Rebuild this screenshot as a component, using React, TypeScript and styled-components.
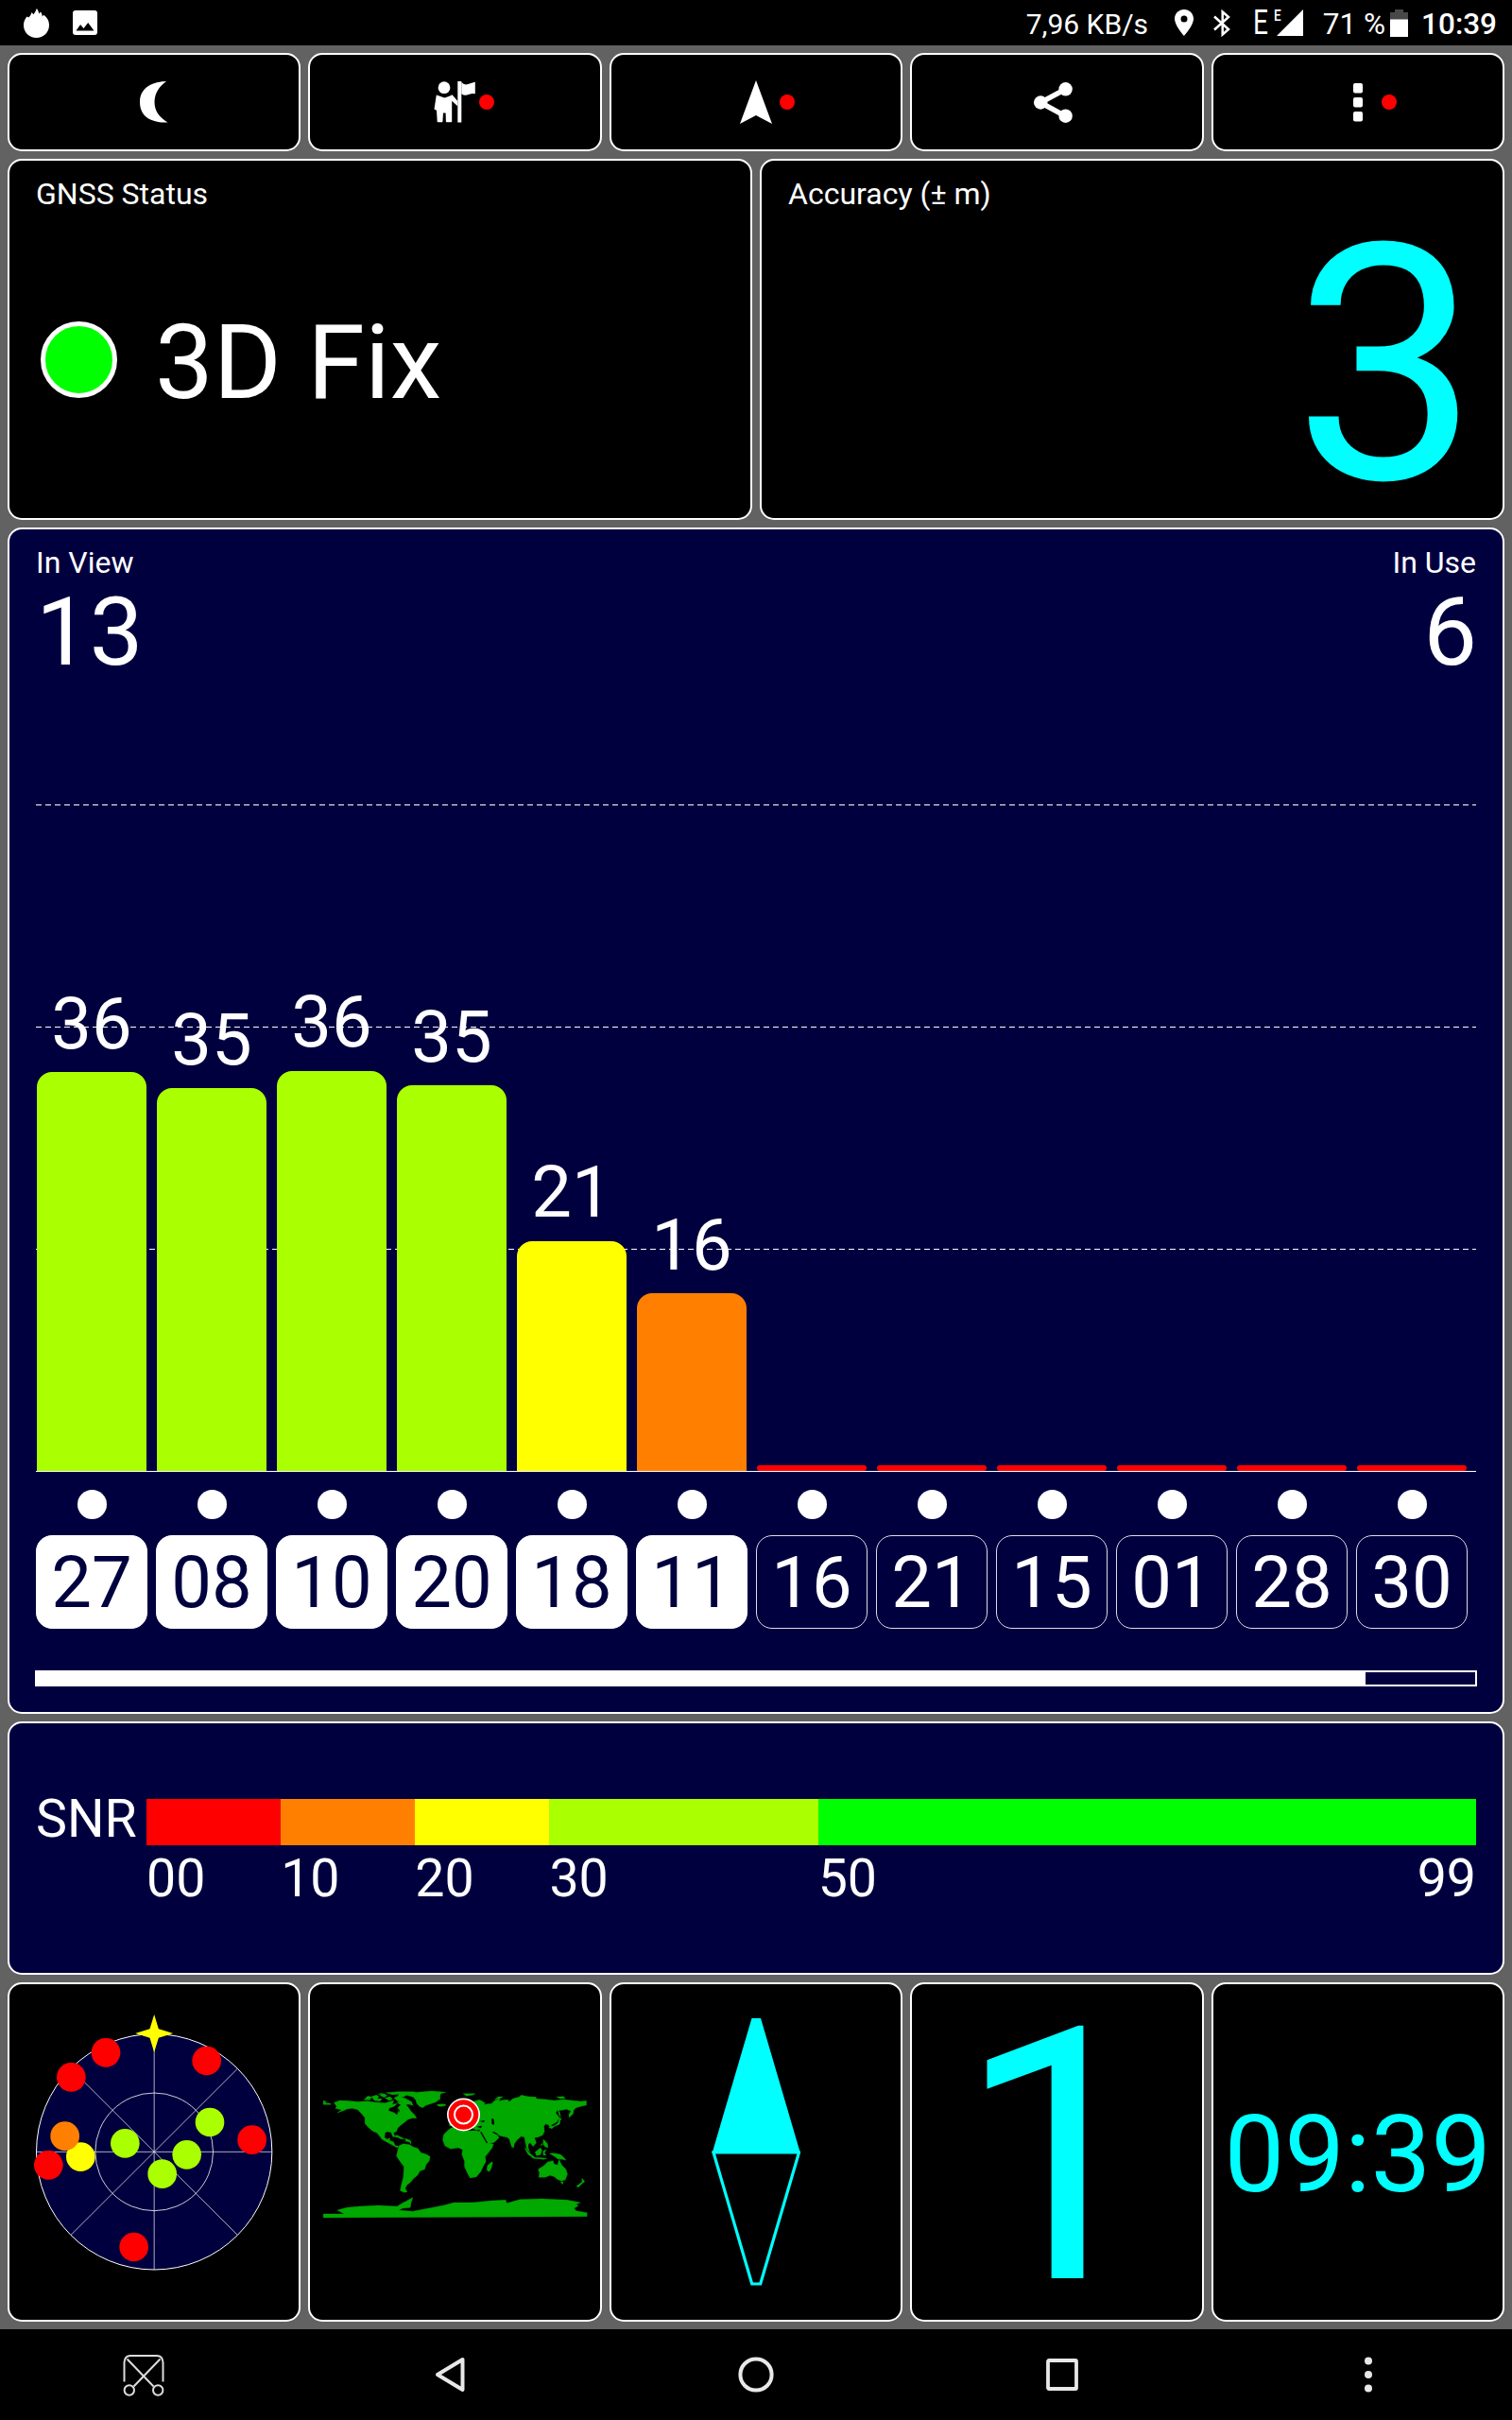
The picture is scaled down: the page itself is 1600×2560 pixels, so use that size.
import React from "react";
import styled, { createGlobalStyle } from "styled-components";

const NAVY = "#00003f";
const LIME = "#aaff00";
const CYAN = "#00ffff";

const GlobalStyle = createGlobalStyle`
  body { margin: 0; background: #000; }
  *, *::before, *::after { box-sizing: border-box; }
  svg { display: block; flex: none; }
`;

const Screen = styled.div`
  width: 1600px;
  height: 2560px;
  display: flex;
  flex-direction: column;
  overflow: hidden;
  background: #000;
  color: #fff;
  font-family: Roboto, "Liberation Sans", sans-serif;
`;

/* ---------- status bar ---------- */

const StatusBar = styled.header`
  height: 48px;
  flex: none;
  display: flex;
  justify-content: space-between;
  padding: 0 16px 0 25px;
`;

const StatusGroup = styled.div`
  display: flex;
  align-items: center;
`;

const StatusText = styled.span<{ $size: number; $width: number; $bold?: boolean }>`
  width: ${(p) => p.$width}px;
  padding-top: 3px;
  font-size: ${(p) => p.$size}px;
  line-height: 45px;
  font-weight: ${(p) => (p.$bold ? 500 : 400)};
  text-align: right;
  white-space: nowrap;
`;

const NetworkType = styled.span`
  width: 22px;
  margin-left: 24px;
  font-size: 36px;
  line-height: 46px;
  transform: scaleX(0.78);
  transform-origin: left;
`;

const Signal = styled.div`
  width: 31px;
  height: 28px;
  display: grid;
  > * { grid-area: 1 / 1; }
`;

const SignalType = styled.span`
  font-size: 17px;
  line-height: 12px;
  font-weight: 500;
  transform: scaleX(0.8);
  transform-origin: left;
`;

const Spacer = styled.span<{ $w: number }>`
  width: ${(p) => p.$w}px;
`;

/* ---------- dashboard ---------- */

const Dashboard = styled.main`
  flex: none;
  height: 2416px;
  padding: 8px;
  background: #626262;
  display: grid;
  grid-template-rows: 104px 382px 1255px 268px 359px;
  row-gap: 8px;
`;

const Row = styled.div<{ $cols: number }>`
  min-height: 0;
  display: grid;
  grid-template-columns: repeat(${(p) => p.$cols}, 1fr);
  grid-template-rows: 100%;
  column-gap: 8px;
`;

const Card = styled.section<{ $navy?: boolean }>`
  min-width: 0;
  min-height: 0;
  border: 2px solid #fff;
  border-radius: 15px;
  background: ${(p) => (p.$navy ? NAVY : "#000")};
  display: flex;
  flex-direction: column;
`;

const InfoCard = styled(Card)`
  padding: 16px 28px 0;
`;

const ToolButton = styled.button`
  position: relative;
  padding: 0;
  border: 2px solid #fff;
  border-radius: 15px;
  background: #000;
  display: flex;
  align-items: center;
  justify-content: center;
`;

const Alert = styled.i`
  position: absolute;
  left: calc(50% + 25.5px);
  top: 42px;
  width: 16px;
  height: 16px;
  border-radius: 50%;
  background: #f00;
`;

const Label = styled.div`
  font-size: 32px;
  line-height: 38px;
`;

const FixRow = styled.div`
  height: 312px;
  padding-left: 5px;
  display: flex;
  align-items: center;
  gap: 40px;
`;

const FixLamp = styled.i`
  width: 81px;
  height: 81px;
  border: 5px solid #fff;
  border-radius: 50%;
  background: #0f0;
`;

const FixText = styled.span`
  padding-top: 8px;
  font-size: 110px;
  line-height: 112px;
`;

const Accuracy = styled.div`
  margin-right: -3px;
  font-size: 349px;
  line-height: 325px;
  color: ${CYAN};
  text-align: right;
`;

/* ---------- satellites ---------- */

const Counts = styled.div`
  display: flex;
  justify-content: space-between;
`;

const Count = styled.div<{ $right?: boolean }>`
  text-align: ${(p) => (p.$right ? "right" : "left")};
`;

const CountValue = styled.div<{ $shift?: number }>`
  margin: 5px -${(p) => p.$shift ?? 0}px 0 0;
  font-size: 101px;
  line-height: 100px;
`;

const Chart = styled.div`
  height: 838px;
  flex: none;
  display: grid;
  border-bottom: 1px solid #fff;
  > * { grid-area: 1 / 1; }
`;

const GridLines = styled.div`
  padding-top: 132px;
  display: grid;
  grid-template-rows: repeat(3, 235px);
`;

const GridLine = styled.div`
  background: repeating-linear-gradient(90deg, #fff 0 6px, transparent 6px 10px) top / 100% 1px no-repeat;
`;

const Columns = styled.div`
  display: grid;
  grid-template-columns: repeat(12, 127px);
`;

const Column = styled.div`
  width: 118px;
  display: flex;
  flex-direction: column;
  align-items: center;
  justify-content: flex-end;
`;

const BarValue = styled.span`
  font-size: 76px;
  line-height: 76px;
  margin-bottom: 13.500px;
`;

const Bar = styled.div<{ $color: string; $flat: boolean }>`
  width: 116.5px;
  background: ${(p) => p.$color};
  border-radius: ${(p) => (p.$flat ? "3px" : "16px 16px 0 0")};
`;

const Markers = styled(Columns)`
  margin-top: 18.5px;
`;

const Marker = styled.div`
  width: 118px;
  display: flex;
  flex-direction: column;
  align-items: center;
  gap: 17.5px;
`;

const Dot = styled.i`
  width: 31px;
  height: 31px;
  border-radius: 50%;
  background: #fff;
`;

const Chip = styled.span<{ $used: boolean }>`
  width: 118px;
  height: 99px;
  border: 1px solid ${(p) => (p.$used ? "#fff" : "#dcdce6")};
  border-radius: 17px;
  background: ${(p) => (p.$used ? "#fff" : "transparent")};
  color: ${(p) => (p.$used ? NAVY : "#fff")};
  font-size: 76px;
  line-height: 98px;
  text-align: center;
`;

const Progress = styled.div`
  width: 1526px;
  height: 17px;
  margin: 44px -1px 0;
  border: 2px solid #fff;
`;

const ProgressFill = styled.div`
  width: 1406px;
  height: 100%;
  background: #fff;
`;

/* ---------- SNR legend ---------- */

const SnrCard = styled(Card)`
  flex-direction: row;
  align-items: flex-start;
  padding: 73px 28px 0;
`;

const SnrText = styled.span`
  font-size: 55.5px;
  line-height: 58px;
`;

const SnrName = styled(SnrText)`
  width: 117px;
`;

const Scale = styled.div`
  flex: 1;
  display: flex;
  padding-top: 7px;
`;

const Segment = styled.div<{ $grow: number }>`
  flex: ${(p) => p.$grow} 1 0;
  min-width: 0;
`;

const Swatch = styled.div<{ $color: string }>`
  height: 49px;
  background: ${(p) => p.$color};
`;

const SegmentLabels = styled.div`
  margin-top: 7px;
  display: flex;
  justify-content: space-between;
`;

/* ---------- bottom tiles ---------- */

const Tile = styled(Card)`
  align-items: center;
`;

const BigValue = styled.span<{ $size: number }>`
  font-size: ${(p) => p.$size}px;
  line-height: ${(p) => (p.$size > 200 ? 366 : 361)}px;
  color: ${CYAN};
`;

const NavBar = styled.nav`
  flex: 1;
  display: grid;
  grid-template-columns: repeat(5, 324px);
  justify-content: center;
  justify-items: center;
  align-items: center;
`;

/* ---------- icons ---------- */

const Flame = () => (
  <svg width="27" height="31" viewBox="0 0 27 31" fill="#fff">
    <path d="M13.500 31C6 31 0 25.500 0 17.500c0-3.800 1.500-6.500 3.500-9l1.800 1C6.500 8.500 8 6.500 8.500 4l2 2.200C12 4.500 12.800 2.500 13.800 0c1.500 1.800 2.200 3.500 2.400 5.500L18 3.500c1.200 1.500 1.600 3 1.700 5l1.600-1.700C25 9.500 27 13 27 17.500 27 25.500 21 31 13.500 31z" />
  </svg>
);

const Picture = () => (
  <svg width="26" height="26" viewBox="0 0 26 26">
    <rect width="26" height="26" rx="3" fill="#fff" />
    <path d="M3.500 21.500l4.600-6.500 3.400 4 4.700-6 6.300 8.500z" fill="#000" />
  </svg>
);

const Pin = () => (
  <svg width="20" height="28" viewBox="0 0 20 28">
    <path fillRule="evenodd" fill="#fff" d="M10 0C4.500 0 0 4.400 0 9.800 0 17 10 28 10 28s10-11 10-18.200C20 4.400 15.500 0 10 0zm0 13.400a3.500 3.500 0 110-7 3.500 3.500 0 010 7z" />
  </svg>
);

const Bluetooth = () => (
  <svg width="18" height="29" viewBox="0 0 18 29" fill="none" stroke="#fff" strokeWidth="2.500">
    <path d="M1 7.500l15 13.500-6.300 5.500V2.500L16 8 1 21.500" />
  </svg>
);

const SignalWedge = () => (
  <svg width="31" height="28" viewBox="0 0 31 28">
    <path d="M31 0v28H3z" fill="#fff" />
  </svg>
);

const Battery = () => (
  <svg width="19" height="29" viewBox="0 0 19 29">
    <path d="M0 3h5V0h9v3h5v8H0z" fill="#484848" />
    <path d="M0 10.500h19V29H0z" fill="#fff" />
  </svg>
);

const Moon = () => (
  <svg width="30" height="46" viewBox="0 0 30 46">
    <path d="M28 1C22 1 0 3 0 23s20 22 29.500 21.500C21 39 15.500 33 15.500 23S21 6 28 1z" fill="#fff" />
  </svg>
);

const Guide = () => (
  <svg width="45" height="44" viewBox="0 0 45 44" fill="#fff">
    <circle cx="11" cy="6.700" r="6.400" />
    <path d="M2.800 14.500l3.700 1.200 5 1.800 5-1.800 3-1.500 5.700 6.500v5.500l-6-5.500v21.800q0 .8-.8.800h-4.800q-.6 0-.7-.8l-.3-9h-2.600l-.6 9q0 .8-.8.800H4.500q-.8 0-.8-.8L3 30.700l-2.500-1.300z" />
    <path d="M25.300 0h4v43.500h-4z" />
    <path d="M29.300 1q3 3.500 7 2t7.500-2.200v12.500q-3-.8-7 .8-4 1.800-7.500-.8z" />
  </svg>
);

const Arrow = () => (
  <svg width="34" height="46" viewBox="0 0 34 46">
    <path d="M17 0l17 46L17 37 0 46z" fill="#fff" />
  </svg>
);

const Share = () => (
  <svg width="49" height="43" viewBox="0 0 49 43" fill="#fff">
    <path d="M33.500 7.300L7 21.500l26.500 14.300" fill="none" stroke="#fff" strokeWidth="5.500" />
    <circle cx="33.600" cy="7.300" r="7.200" />
    <circle cx="7.200" cy="21.500" r="7.200" />
    <circle cx="33.600" cy="35.700" r="7.200" />
  </svg>
);

const MenuSquares = () => (
  <svg width="10" height="41" viewBox="0 0 10 41" fill="#fff">
    <rect y="0" width="10" height="10.500" rx="2" />
    <rect y="15" width="10" height="10.500" rx="2" />
    <rect y="30" width="10" height="10.500" rx="2" />
  </svg>
);

const Clip = () => (
  <svg width="44" height="45" viewBox="0 0 44 45" fill="none" stroke="#dcdcdc" strokeWidth="2">
    <path d="M1.500 29.500V9Q2 2 8 2h28q6 0 6.500 7v20.500M4.500 5.500l28 29M39.500 5.500l-28 29" />
    <circle cx="6.800" cy="38.500" r="5.200" />
    <circle cx="37.200" cy="38.500" r="5.200" />
  </svg>
);

const Back = () => (
  <svg width="32" height="38" viewBox="0 0 32 38">
    <path d="M29.500 3v32L3 19z" fill="none" stroke="#e8e8e8" strokeWidth="4" strokeLinejoin="round" />
  </svg>
);

const Home = () => (
  <svg width="38" height="38" viewBox="0 0 38 38">
    <circle cx="19" cy="19" r="16.600" fill="none" stroke="#e8e8e8" strokeWidth="4" />
  </svg>
);

const Recents = () => (
  <svg width="34" height="34" viewBox="0 0 34 34">
    <rect x="2" y="2" width="30" height="30" rx="1" fill="none" stroke="#e8e8e8" strokeWidth="3.800" />
  </svg>
);

const More = () => (
  <svg width="8" height="38" viewBox="0 0 8 38" fill="#e8e8e8">
    <circle cx="4" cy="4.500" r="4" />
    <circle cx="4" cy="19" r="4" />
    <circle cx="4" cy="33.500" r="4" />
  </svg>
);

/* ---------- sky plot, map and needle ---------- */

const skySatellites: [number, number, string][] = [
  [336, 244, "#f00"],
  [226, 322, "#f00"],
  [656, 270, "#f00"],
  [800, 521, "#f00"],
  [154, 601, "#f00"],
  [425, 861, "#f00"],
  [256, 575, "#ff0"],
  [206, 509, "#ff8000"],
  [666, 465, LIME],
  [593, 568, LIME],
  [515, 629, LIME],
  [397, 532, LIME],
];

const SkyPlot = () => (
  <svg width="306" height="355" viewBox="30 27 918 1065">
    <circle cx="489.500" cy="559" r="374" fill={NAVY} stroke="#fff" strokeWidth="3" />
    <g stroke="#fff" strokeWidth="2.400" fill="none">
      <circle cx="489.500" cy="559" r="187" />
      <path d="M115 559h749M489.500 185v748M225 295l529 528M754 295L225 823" strokeOpacity="0.85" />
    </g>
    {skySatellites.map(([x, y, color]) => (
      <circle key={`${x}-${y}`} cx={x} cy={y} r="46" fill={color} />
    ))}
    <path d="M489.500 123l14 46 46 14-46 14-14 46-14-46-46-14 46-14z" fill="#ff0" />
  </svg>
);

const land = [
  "M66 124l9 4-3 4 16 1 2 4H66z",
  "M100 131l18-7 22 1 35 3 30-2 30 4 27 2 13-4 15-4-5 12 15-2-8 8-16 6-4 8 18 6 10 8 4-10-1-14 9-8-12-8 12-4 13 8 11 12 8 12 12 12 6 10h-14l-13 4-10 8-13 10-10 10-4 10-9 5 3 9-5 3-6-14-12-2-7 4-2 14 8 6 10-4-2 8 13 4 5 12 12 2-6 5-16-9-18-10-14-8-6-8-10-12-14-6-14-12-10-12v-18l-10-12-13-14-17-4-16 2-14 6-18 6 14-9-20-5 4-6z",
  "M195 122l12-12 12 3-5 9zM218 112l16-5 8 4-4 8 14-1-6 8-18-2zM245 108l14-6 9 6-8 6zM262 116l16-4 8 8-12 4zM240 104l12-3 6 4z",
  "M290 116l16-7 20 8 20 11 5 12-15-4-10 2-10-10-14-2z",
  "M265 99l40-3 48 0 8 4-25 4-14 8-20 0 4-8-20 2z",
  "M325 104l20-5 30-2 35-3 45 4-16 4-3 8 1 9-14 10-18 6-14 5-10 7-11-5-8-10-2-9-9-10-14-4z",
  "M427 137l14-2 12 1 2 4-14 3-10-1z",
  "M510 102l38 0-8 5-20 3zM610 120l12-8 14 0-10 6zM806 113l22-2 6 6-16 1z",
  "M306 268l14-7 20 3 12 8 14 4 10 14 16 4 13 8-3 14-10 12-4 14-16 6-6 12-14 12-10 12-10 8-6 10 6 12-10 2-12-6 4-20 6-22 2-34-12-16-12-18 4-16z",
  "M286 238l14-4 12 6 12 6-12 0-10-5zM326 245l14 4 5 6-1 7-3-5-14-4z",
  "M470 212l20-6 30 14 30 0 16 2 4 14 10 16 8 10 18 0-4 12-12 16-10 12 2 16-8 14-8 18-14 16-20 4-8-14-10-22v-18l-8-20 2-16-14-6-24 4-18-10-7-18 3-18 12-12z",
  "M587 330l14-12 2 5-4 16-6 11-8-5z",
  "M466 204l2-18 22-2 10-16 30-28 15-14 17-4 18 10-5 5 25-3 10-10 18-7-5 9 18-4 11 0 4 6 12-10 20-5 6-6 24 5 22 1 4 6 24 1 32 4 30-3 26 3 28 3 17-2v14l-15 3-18 5-7 7-2 12-12 12-2-10 7-10-14-6-14 3-16 1-4 8 11 14-8 14-10 6-8 4 6 8-4 4-10-12-9-4-6 8 2 16-6 12-14 6-12 2 6 16-10 12-9-12-6 4-1 12 6 14-10-10-4-18-4-20-10-2-14 12-8 12-2 12-6-2-8-26-8-6-14-2-18-6 8 10-14 14-24 8-10-16-14-22 2-10-14 2-12-8z",
  "M706 273l14 17 16 14-3 3-17-12-8-14zM728 304l34 2 14 2-10 3-32-3zM738 288l16-13 6 5-4 16-13 3zM764 284l10-4-6 10 5 8-9 0zM764 248l6 4 8 10 1 12-9-3-6-8zM755 268l6-8 1 4zM784 292l14-1 20 4 10 8 9 11-15-4-12-1-10-7z",
  "M782 208l16-4 12-8 4-10-2-8 10 4-4 6-2 12-12 4-10 6-10 2zM811 154l5 6 3 16-5-6z",
  "M748 342l18-11 12-12 17-4 4 11 11 3 4-18 9 18 13 13 5 16-7 18-12 4-14-6-8-8-14-4-16 6-20 0 2-14z",
  "M819 383l9-1-3 8zM887 371l9 10-8 6-12 12-7-3 8-6 10-7z",
  "M66 496v-12l66 0 -22-12 30-8 40-4 60-3 60 3 16-10 34-18-6 18-2 14-24 2-12 6 44 4 30-6 32-6 38-8 30-8 60 0 60-6 45-2 3 10 42-12 70-2 80 4 42 8-14 6 8 4-14 8 6 8 35 6v12z",
];

const WorldMap = () => (
  <svg width="306" height="355" viewBox="26.500 -245 918 1065">
    <g fill="#00a800" stroke="#00a800" strokeWidth="1" strokeLinejoin="bevel">
      {land.map((d) => (
        <path key={d} d={d} />
      ))}
    </g>
    <path d="M600 181l7 2 2 18-8-2zM552 207l18-3-4 8zM560 190l18-3-2 6zM302 148l6 6-2 8z" fill="#000" />
    <path d="M566 224l20 35M604 224l16 8" stroke="#000" strokeWidth="4" />
    <circle cx="511" cy="169" r="50" fill="#f00" stroke="#fff" strokeWidth="5" />
    <circle cx="511" cy="169" r="28.500" fill="#f00" stroke="#fff" strokeWidth="6" />
  </svg>
);

const Needle = () => (
  <svg width="94" height="355" viewBox="753 2099 94 355">
    <path d="M795.500 2135h9.500l42 143H753.500z" fill={CYAN} />
    <path d="M755 2277h90.500l-40.800 139h-9z" fill="none" stroke={CYAN} strokeWidth="3.200" />
  </svg>
);

/* ---------- data ---------- */

type Satellite = { id: string; snr?: number; height: number; color: string };

const satellites: Satellite[] = [
  { id: "27", snr: 36, height: 421.7, color: LIME },
  { id: "08", snr: 35, height: 404.6, color: LIME },
  { id: "10", snr: 36, height: 423.5, color: LIME },
  { id: "20", snr: 35, height: 407.8, color: LIME },
  { id: "18", snr: 21, height: 243.5, color: "#ffff00" },
  { id: "11", snr: 16, height: 187.8, color: "#ff8000" },
  ...["16", "21", "15", "01", "28", "30"].map((id) => ({ id, height: 6, color: "#ff0000" })),
];

const scale = [
  { grow: 10, color: "#ff0000", labels: ["00"] },
  { grow: 10, color: "#ff8000", labels: ["10"] },
  { grow: 10, color: "#ffff00", labels: ["20"] },
  { grow: 20, color: LIME, labels: ["30"] },
  { grow: 49, color: "#00ff00", labels: ["50", "99"] },
];

const tools = [
  { name: "Night mode", icon: <Moon />, alert: false },
  { name: "Guide", icon: <Guide />, alert: true },
  { name: "Navigate", icon: <Arrow />, alert: true },
  { name: "Share", icon: <Share />, alert: false },
  { name: "Menu", icon: <MenuSquares />, alert: true },
];

export default function App() {
  return (
    <Screen>
      <GlobalStyle />
      <StatusBar>
        <StatusGroup>
          <Flame />
          <Spacer $w={25} />
          <Picture />
        </StatusGroup>
        <StatusGroup>
          <StatusText $size={30} $width={140}>7,96 KB/s</StatusText>
          <Spacer $w={28} />
          <Pin />
          <Spacer $w={21} />
          <Bluetooth />
          <NetworkType>E</NetworkType>
          <Signal>
            <SignalWedge />
            <SignalType>E</SignalType>
          </Signal>
          <StatusText $size={31.5} $width={87}>71 %</StatusText>
          <Spacer $w={5} />
          <Battery />
          <StatusText $size={31.5} $width={94} $bold>10:39</StatusText>
        </StatusGroup>
      </StatusBar>

      <Dashboard>
        <Row $cols={5}>
          {tools.map((tool) => (
            <ToolButton key={tool.name} aria-label={tool.name}>
              {tool.icon}
              {tool.alert && <Alert />}
            </ToolButton>
          ))}
        </Row>

        <Row $cols={2}>
          <InfoCard>
            <Label>GNSS Status</Label>
            <FixRow>
              <FixLamp />
              <FixText>3D Fix</FixText>
            </FixRow>
          </InfoCard>
          <InfoCard>
            <Label>Accuracy (± m)</Label>
            <Accuracy>3</Accuracy>
          </InfoCard>
        </Row>

        <InfoCard $navy>
          <Counts>
            <Count>
              <Label>In View</Label>
              <CountValue>13</CountValue>
            </Count>
            <Count $right>
              <Label>In Use</Label>
              <CountValue $shift={1}>6</CountValue>
            </Count>
          </Counts>
          <Chart>
            <GridLines>
              <GridLine />
              <GridLine />
              <GridLine />
            </GridLines>
            <Columns>
              {satellites.map((s) => (
                <Column key={s.id}>
                  {s.snr !== undefined && <BarValue>{s.snr}</BarValue>}
                  <Bar $color={s.color} $flat={s.snr === undefined} style={{ height: s.height }} />
                </Column>
              ))}
            </Columns>
          </Chart>
          <Markers>
            {satellites.map((s) => (
              <Marker key={s.id}>
                <Dot />
                <Chip $used={s.snr !== undefined}>{s.id}</Chip>
              </Marker>
            ))}
          </Markers>
          <Progress>
            <ProgressFill />
          </Progress>
        </InfoCard>

        <SnrCard $navy>
          <SnrName>SNR</SnrName>
          <Scale>
            {scale.map((seg) => (
              <Segment key={seg.color} $grow={seg.grow}>
                <Swatch $color={seg.color} />
                <SegmentLabels>
                  {seg.labels.map((label) => (
                    <SnrText key={label}>{label}</SnrText>
                  ))}
                </SegmentLabels>
              </Segment>
            ))}
          </Scale>
        </SnrCard>

        <Row $cols={5}>
          <Tile><SkyPlot /></Tile>
          <Tile><WorldMap /></Tile>
          <Tile><Needle /></Tile>
          <Tile><BigValue $size={374}>1</BigValue></Tile>
          <Tile><BigValue $size={113.5}>09:39</BigValue></Tile>
        </Row>
      </Dashboard>

      <NavBar>
        <Clip />
        <Back />
        <Home />
        <Recents />
        <More />
      </NavBar>
    </Screen>
  );
}
